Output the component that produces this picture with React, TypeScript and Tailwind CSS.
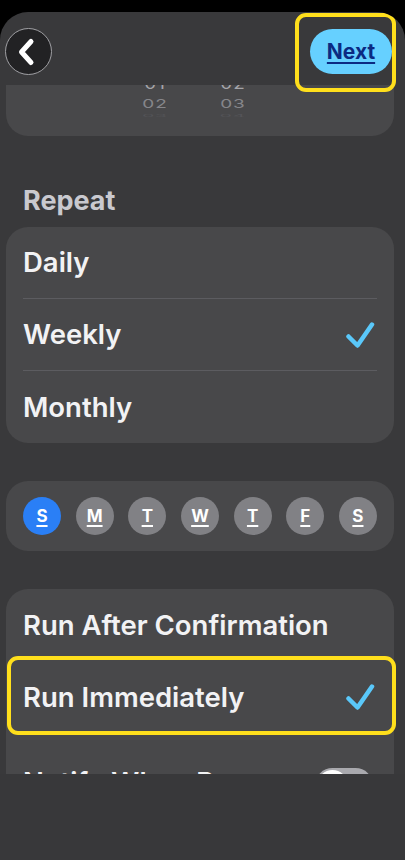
import React from "react";

function Check() {
  return (
    <svg width="30" height="28" viewBox="0 0 30 28" fill="none">
      <path
        d="M3.5 15.5 L12.5 24.5 L27 3.5"
        stroke="#5ac8fa"
        strokeWidth="4.5"
        strokeLinecap="round"
        strokeLinejoin="round"
      />
    </svg>
  );
}

function Row({ label, checked, h = "h-[71px]" }: { label: string; checked?: boolean; h?: string }) {
  return (
    <div className={`${h} flex items-center justify-between pl-[17px] pr-[19px]`}>
      <span className="text-[27.5px] font-semibold text-[#f2f2f4] leading-[33px]">{label}</span>
      {checked ? <Check /> : null}
    </div>
  );
}

const days = ["S", "M", "T", "W", "T", "F", "S"];

export default function App() {
  return (
    <div className="w-[405px] h-[860px] bg-black overflow-hidden font-['Inter',sans-serif]">
      <div className="mt-[12px] h-[848px] rounded-t-[28px] bg-[#39393b] flex flex-col overflow-hidden relative">
        {/* header */}
        <div className="h-[73px] shrink-0 flex justify-between items-start pt-[16px] pl-[5px] pr-[13px]">
          <div className="w-[47px] h-[47px] rounded-full bg-[#222224] border border-[#a0a0a4]">
            <svg width="45" height="45" viewBox="0 0 45 45" fill="none">
              <path
                d="M25 12.5 L15.5 23 L25 33.5"
                stroke="#ffffff"
                strokeWidth="5"
                strokeLinecap="round"
                strokeLinejoin="round"
              />
            </svg>
          </div>
          <div className="mt-[1px] h-[45px] w-[82px] rounded-full bg-[#66d0ff] flex items-center justify-center">
            <span className="text-[21px] font-bold text-[#0b2a82] underline decoration-2 underline-offset-[3px] leading-[26px]">
              Next
            </span>
          </div>
        </div>
        <div className="absolute left-[295px] top-[1px] w-[101px] h-[79px] rounded-[11px] border-4 border-[#ffdf1c]" />

        {/* content */}
        <div className="flex-1 min-h-0 overflow-hidden">
          {/* picker */}
          <div className="ml-[6px] mr-[11px] h-[51px] rounded-b-[22px] bg-[#48484a] overflow-hidden">
            <div className="-mt-[12px] pl-[119px] flex gap-[18px]">
              {[
                ["01", "02", "03"],
                ["02", "03", "04"],
              ].map((col, i) => (
                <div key={i} className="w-[60px] flex flex-col items-center">
                  <div className="h-[22px] flex items-center text-[19px] leading-[22px] text-[#a4a4a8] tracking-[1px] scale-y-[0.8]">
                    {col[0]}
                  </div>
                  <div className="h-[18px] flex items-center text-[19px] leading-[22px] text-[#86868a] tracking-[1px] scale-y-[0.62]">
                    {col[1]}
                  </div>
                  <div className="h-[6px] flex items-center text-[19px] leading-[22px] text-[#545458] tracking-[1px] scale-y-[0.2]">
                    {col[2]}
                  </div>
                </div>
              ))}
            </div>
          </div>

          <div className="mt-[48px] mb-[10px] px-[23px] h-[33px] leading-[33px] text-[27px] font-bold text-[#c9c9cf]">
            Repeat
          </div>

          <div className="ml-[6px] mr-[11px] rounded-[22px] bg-[#48484a]">
            <Row label="Daily" />
            <div className="mx-[17px] h-px bg-[#5c5c60]" />
            <Row label="Weekly" checked />
            <div className="mx-[17px] h-px bg-[#5c5c60]" />
            <Row label="Monthly" h="h-[72px]" />
          </div>

          <div className="mt-[38px] ml-[6px] mr-[11px] h-[70px] rounded-[22px] bg-[#48484a] flex items-center justify-between px-[17px]">
            {days.map((d, i) => (
              <div
                key={i}
                className={`w-[38px] h-[38px] rounded-full flex items-center justify-center ${
                  i === 0 ? "bg-[#2a7ff6]" : "bg-[#818185]"
                }`}
              >
                <span className="text-[17px] font-bold text-white underline decoration-2 underline-offset-[3px] leading-[20px]">
                  {d}
                </span>
              </div>
            ))}
          </div>

          <div className="mt-[38px] ml-[6px] mr-[11px] rounded-[22px] bg-[#48484a]">
            <Row label="Run After Confirmation" h="h-[72px]" />
            <div className="relative">
              <Row label="Run Immediately" checked h="h-[72px]" />
              <div className="absolute left-[1px] -top-[5px] w-[389px] h-[79px] rounded-[11px] border-4 border-[#ffdf1c]" />
            </div>
            <div className="h-[13px]" />
            <div className="h-[72px] flex items-center justify-between pl-[17px] pr-[21px]">
              <span className="text-[27.5px] font-semibold text-[#f2f2f4] leading-[33px]">Notify When Run</span>
              <div className="mt-[6px] w-[58px] h-[35px] rounded-full bg-[#a9a9ae] p-[2px]">
                <div className="w-[31px] h-[31px] rounded-full bg-white" />
              </div>
            </div>
          </div>
        </div>

        {/* bottom */}
        <div className="h-[86px] shrink-0 bg-[#38383a]" />
      </div>
    </div>
  );
}
